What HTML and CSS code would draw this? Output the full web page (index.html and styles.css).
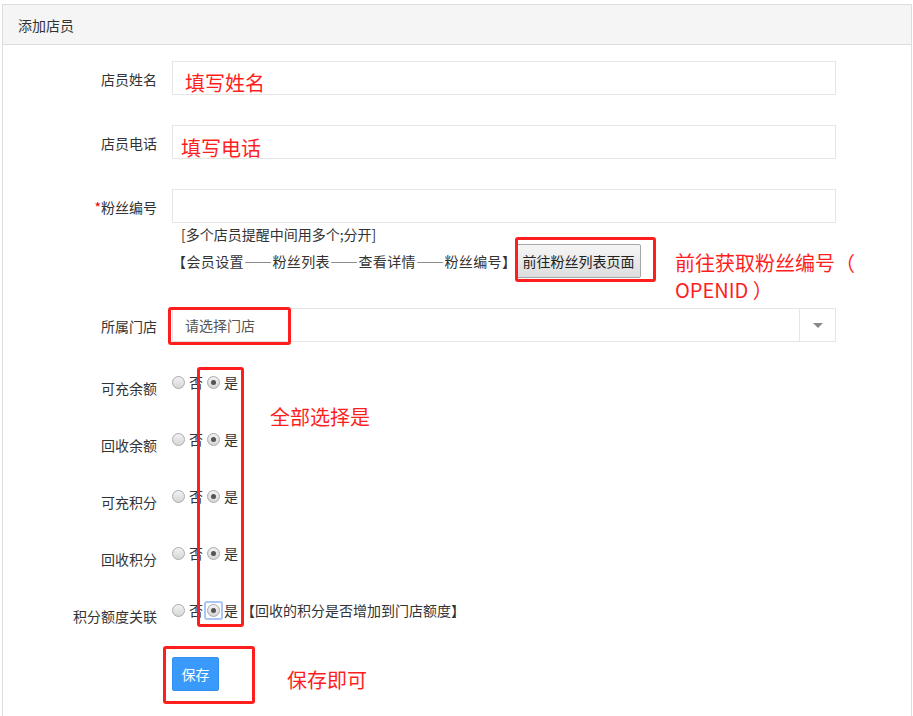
FILE: index.html
```html
<!DOCTYPE html>
<html lang="zh-CN">
  <head>
    <meta charset="UTF-8" />
    <meta name="viewport" content="width=device-width, initial-scale=1.0" />
    <title>添加店员</title>
    <link rel="stylesheet" href="styles.css">
  </head>
  <body>
    <div class="panel">
      <div class="panel-heading">添加店员</div>
      <form class="panel-body">
        <div class="form-row">
          <label class="form-label">店员姓名</label>
          <div class="form-control"><input type="text" class="text-input" /></div>
        </div>

        <div class="form-row">
          <label class="form-label">店员电话</label>
          <div class="form-control"><input type="text" class="text-input" /></div>
        </div>

        <div class="form-row">
          <label class="form-label"><span class="required">*</span>粉丝编号</label>
          <div class="form-control">
            <input type="text" class="text-input" />
            <p class="help help-first">[多个店员提醒中间用多个;分开]</p>
            <p class="help help-path">
              【会员设置——粉丝列表——查看详情——粉丝编号】
              <button type="button" class="btn-default">前往粉丝列表页面</button>
            </p>
          </div>
        </div>

        <div class="form-row store-row">
          <label class="form-label">所属门店</label>
          <div class="form-control">
            <div class="select">
              <span class="select-text">请选择门店</span>
              <span class="select-arrow"><i class="caret"></i></span>
            </div>
          </div>
        </div>

        <div class="form-row radio-row">
          <label class="form-label">可充余额</label>
          <div class="form-control radios">
            <span class="radio"></span><span class="opt">否</span>
            <span class="radio checked"></span><span class="opt">是</span>
          </div>
        </div>

        <div class="form-row radio-row">
          <label class="form-label">回收余额</label>
          <div class="form-control radios">
            <span class="radio"></span><span class="opt">否</span>
            <span class="radio checked"></span><span class="opt">是</span>
          </div>
        </div>

        <div class="form-row radio-row">
          <label class="form-label">可充积分</label>
          <div class="form-control radios">
            <span class="radio"></span><span class="opt">否</span>
            <span class="radio checked"></span><span class="opt">是</span>
          </div>
        </div>

        <div class="form-row radio-row">
          <label class="form-label">回收积分</label>
          <div class="form-control radios">
            <span class="radio"></span><span class="opt">否</span>
            <span class="radio checked"></span><span class="opt">是</span>
          </div>
        </div>

        <div class="form-row radio-row last-radio">
          <label class="form-label">积分额度关联</label>
          <div class="form-control radios">
            <span class="radio"></span><span class="opt">否</span>
            <span class="radio checked focused"></span><span class="opt">是</span>
            <span class="note">【回收的积分是否增加到门店额度】</span>
          </div>
        </div>

        <div class="form-row">
          <span class="form-label"></span>
          <div class="form-control"><button type="button" class="btn-primary">保存</button></div>
        </div>
      </form>
    </div>

    <!-- red markup drawn over the screenshot -->
    <div class="mark mark-name">填写姓名</div>
    <div class="mark mark-phone">填写电话</div>
    <div class="mark mark-openid">前往获取粉丝编号（<br>OPENID ）</div>
    <div class="mark mark-all">全部选择是</div>
    <div class="mark mark-save">保存即可</div>

    <div class="box box-link"></div>
    <div class="box box-store"></div>
    <div class="box box-radios"></div>
    <div class="box box-save"></div>
  </body>
</html>
```

FILE: styles.css
```css
body {
  margin: 0;
  padding: 0;
  font-family: "Noto Sans CJK SC", "Noto Sans", sans-serif;
  font-size: 14px;
  color: #333;
  background: #fff;
  overflow: hidden;
}
.panel {
  margin: 4px 1px 0 2px;
  border: 1px solid #ddd;
  border-bottom: none;
  height: 740px;
}
.panel-heading {
  height: 37px;
  padding: 2px 0 0 15px;
  line-height: 37px;
  background: #f5f5f5;
  border-bottom: 1px solid #ddd;
}
.panel-body {
  padding-top: 16px;
}
.form-row {
  display: grid;
  grid-template-columns: 154px 664px;
  column-gap: 15px;
  margin-bottom: 30px;
}
.form-label {
  text-align: right;
  padding-top: 8px;
  line-height: 20px;
}
.required {
  color: #e00;
}
.text-input {
  display: block;
  box-sizing: border-box;
  width: 100%;
  height: 34px;
  margin: 0;
  border: 1px solid #e5e5e5;
  font: inherit;
}
.help {
  margin: 0;
  line-height: 20px;
}
.help-first {
  margin-top: 1px;
  padding-left: 9px;
}
.help-path {
  display: flex;
  align-items: center;
  height: 34px;
  letter-spacing: 0.4px;
}
.btn-default {
  height: 34px;
  width: 126px;
  margin-left: -1px;
  padding: 0;
  font: inherit;
  letter-spacing: 0;
  color: #222;
  background: linear-gradient(#f6f6f6, #dddddd);
  border: 1px solid #a6a6a6;
  border-radius: 2px;
}
.select {
  display: flex;
  box-sizing: border-box;
  height: 34px;
  border: 1px solid #e5e5e5;
}
.select-text {
  flex: 1;
  padding-left: 12px;
  line-height: 32px;
  color: #555;
}
.select-arrow {
  width: 35px;
  border-left: 1px solid #e5e5e5;
  display: flex;
  align-items: center;
  justify-content: center;
}
.caret {
  width: 0;
  height: 0;
  border-left: 5px solid transparent;
  border-right: 5px solid transparent;
  border-top: 5px solid #888;
}
.store-row {
  margin-bottom: 28px;
}
.radio-row {
  margin-bottom: 29px;
}
.last-radio {
  margin-bottom: 31px;
}
.radios {
  display: flex;
  align-items: center;
  height: 20px;
  padding-top: 2px;
}
.radio {
  position: relative;
  box-sizing: border-box;
  width: 13px;
  height: 13px;
  margin-right: 4px;
  border: 1px solid #aaa;
  border-radius: 50%;
  background: linear-gradient(#f2f2f2, #d6d6d6);
}
.radio.checked::after {
  content: "";
  position: absolute;
  left: 3px;
  top: 3px;
  width: 5px;
  height: 5px;
  border-radius: 50%;
  background: #555;
}
.radio.focused::before {
  content: "";
  position: absolute;
  left: -4px;
  top: -4px;
  width: 15px;
  height: 15px;
  border: 2px solid #a9c6f5;
  border-radius: 3px;
}
.opt {
  margin-right: 4px;
  line-height: 20px;
}
.note {
  margin-left: -1px;
}
.btn-primary {
  height: 34px;
  width: 47px;
  padding: 0;
  font: inherit;
  color: #fff;
  background: #3a9afb;
  border: 1px solid #3490f0;
  border-radius: 2px;
}

/* annotations on top of the form */
.mark {
  position: absolute;
  color: #ff1e1e;
  font-size: 20px;
  line-height: 27px;
  white-space: nowrap;
}
.mark-name { left: 185px; top: 69px; }
.mark-phone { left: 181px; top: 134px; }
.mark-openid { left: 675px; top: 249px; }
.mark-all { left: 270px; top: 403px; }
.mark-save { left: 287px; top: 666px; }
.box {
  position: absolute;
  box-sizing: border-box;
  border: 3px solid #ff1e1e;
  border-radius: 3px;
}
.box-link { left: 515px; top: 237px; width: 141px; height: 45px; }
.box-store { left: 168px; top: 307px; width: 123px; height: 38px; }
.box-radios { left: 197px; top: 367px; width: 47px; height: 260px; }
.box-save { left: 163px; top: 646px; width: 92px; height: 58px; }
```
